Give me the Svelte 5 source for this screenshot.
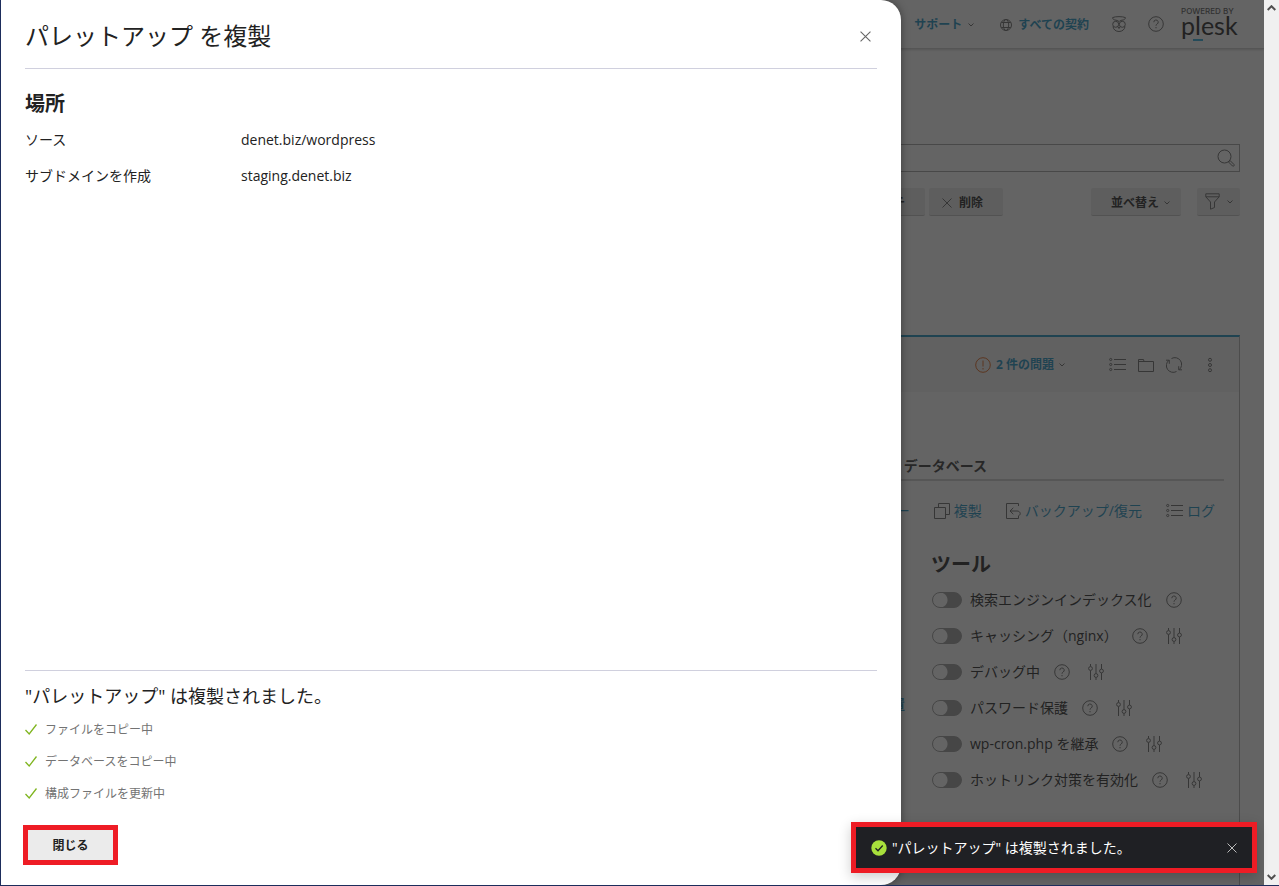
<script>
  const steps = ['ファイルをコピー中', 'データベースをコピー中', '構成ファイルを更新中'];
  const tools = [
    { label: '検索エンジンインデックス化', settings: false },
    { label: 'キャッシング（nginx）', settings: true },
    { label: 'デバッグ中', settings: true },
    { label: 'パスワード保護', settings: true },
    { label: 'wp-cron.php を継承', settings: true },
    { label: 'ホットリンク対策を有効化', settings: true },
  ];
</script>

{#snippet chevron()}
  <svg class="chevron" width="6" height="6" viewBox="0 0 6 6"><path d="M.5 1.5 3 4 5.500 1.500" /></svg>
{/snippet}

{#snippet help()}
  <svg width="16" height="16" viewBox="0 0 16 16"><circle cx="8" cy="8" r="7.300" /><path d="M5.800 6.200a2.200 2.200 0 1 1 3.300 1.900C8.300 8.600 8 8.900 8 9.700M8 11v1.300" /></svg>
{/snippet}

{#snippet list()}
  <svg width="17" height="16" viewBox="0 0 17 16"><path d="M5 2.500h12M5 7.500h12M5 12.500h12" /><circle cx="1.700" cy="2.500" r="1.100" /><circle cx="1.700" cy="7.500" r="1.100" /><circle cx="1.700" cy="12.500" r="1.100" /></svg>
{/snippet}

{#snippet cross(size)}
  <svg width={size} height={size} viewBox="0 0 10 10"><path d="m.5.5 9 9m0-9-9 9" /></svg>
{/snippet}

<div class="window">
  <div class="page">
    <header class="topbar">
      <a href="#support" class="menu">サポート{@render chevron()}</a>
      <a href="#subscriptions" class="scope">
        <svg width="12" height="12" viewBox="0 0 12 12"><circle cx="6" cy="6" r="5.500" /><ellipse cx="6" cy="6" rx="2.700" ry="5.500" /><path d="M1.300 3.500h9.400M1.300 8.500h9.400" /></svg>
        すべての契約
      </a>
      <button class="plain" aria-label="アシスタント">
        <svg width="14" height="16" viewBox="0 0 14 16"><path d="M.6 1.600C3 .3 11 .3 13.400 1.600c-.2 2-1.600 2.400-3.400 2.600C8.500 4.400 7.500 4.900 7 5.600 6.500 4.900 5.500 4.400 4 4.200 2.200 4 .8 3.600.6 1.600M1 10.500c.3 3 2.800 5 6 5s5.700-2 6-5M5.800 10.500 7 12.500l1.200-2" /><circle cx="3.700" cy="8.300" r="3" /><circle cx="10.300" cy="8.300" r="3" /></svg>
      </button>
      <button class="plain" aria-label="ヘルプ">{@render help()}</button>
      <div class="brand"><small>POWERED BY</small><span>plesk</span></div>
    </header>

    <main>
      <label class="search">
        <input type="search" aria-label="検索" />
        <svg width="18" height="18" viewBox="0 0 18 18"><circle cx="7.500" cy="7.500" r="6.500" /><path d="m11.500 13 1.500-1.500 4 4c.8 1-.7 2.300-1.500 1.500z" /></svg>
      </label>

      <div class="toolbar">
        <button class="btn cut">チ</button>
        <button class="btn remove">{@render cross(10)}削除</button>
        <button class="btn sort">並べ替え{@render chevron()}</button>
        <button class="btn filter" aria-label="フィルタ">
          <svg width="15" height="17" viewBox="0 0 15 17"><path d="M.8.8h13.400v3L9.500 9v5.500l-4 1.700V9L.8 3.800zM.8 3.800h13.400" /></svg>
          {@render chevron()}
        </button>
      </div>

      <section class="card">
        <header class="cardbar">
          <a href="#issues" class="issues">
            <svg class="warn" width="16" height="16" viewBox="0 0 16 16"><circle cx="8" cy="8" r="7.300" /><path d="M8 3.500v6M8 11v1.500" /></svg>
            2 件の問題{@render chevron()}
          </a>
          <div class="actions">
            <button class="plain" aria-label="ログ">{@render list()}</button>
            <button class="plain" aria-label="フォルダ"><svg width="16" height="16" viewBox="0 0 16 16"><path d="M.5 14.500v-12h5l.500 2h9.500v10zM.5 4.500H6" /></svg></button>
            <button class="plain" aria-label="更新"><svg width="16" height="16" viewBox="0 0 16 16"><path d="M5.500 1.500A6.800 6.800 0 0 1 13 12.800M10.500 14.500A6.800 6.800 0 0 1 3 3.200M0 3.200h3.300v3.600M16 12.800h-3.300V9.200" /></svg></button>
          </div>
          <button class="plain" aria-label="その他"><svg width="6" height="16" viewBox="0 0 6 16"><circle cx="3" cy="2.800" r="1.500" /><circle cx="3" cy="8" r="1.500" /><circle cx="3" cy="13.200" r="1.500" /></svg></button>
        </header>

        <div class="cardbody">
          <nav class="tabs"><a href="#database">データベース</a></nav>
          <nav class="links">
            <a href="#login">ー</a>
            <a href="#clone"><svg width="16" height="16" viewBox="0 0 16 16"><path d="M.5 4.500h11v11H.5zM4.500 4.500v-4h11v11h-4" /></svg>複製</a>
            <a href="#backup"><svg width="15" height="16" viewBox="0 0 15 16"><path d="M12.500 3V.5H.5v15h12V13M7.300 4.800 4 8l3.300 3.200M4 8h7c4 0 4 4.500 1.500 4.500" /></svg>バックアップ/復元</a>
            <a href="#log">{@render list()}ログ</a>
          </nav>

          <div class="columns">
            <a href="#install" class="edge">置</a>
            <div class="tools">
              <h2>ツール</h2>
              <ul>
                {#each tools as tool}
                  <li>
                    <label><input type="checkbox" role="switch" />{tool.label}</label>
                    <button class="plain" aria-label="ヘルプ">{@render help()}</button>
                    {#if tool.settings}
                      <button class="plain gear" aria-label="設定">
                        <svg width="16" height="16" viewBox="0 0 16 16"><path d="M2.500 0v2.500M2.500 6.500V16M8 0v9.500M8 13.500V16M13.500 0v5M13.500 9v7" /><circle cx="2.500" cy="4.500" r="1.900" /><circle cx="8" cy="11.500" r="1.900" /><circle cx="13.500" cy="7" r="1.900" /></svg>
                      </button>
                    {/if}
                  </li>
                {/each}
              </ul>
            </div>
          </div>
        </div>
      </section>
    </main>
  </div>

  <div class="scrim"></div>

  <div class="scroll">
    <svg width="9" height="6" viewBox="0 0 9 6"><path d="M.700 5 4.500 1.200 8.300 5" /></svg>
    <svg width="9" height="6" viewBox="0 0 9 6"><path d="M.700 1 4.500 4.800 8.300 1" /></svg>
  </div>

  <div class="drawer" role="dialog" aria-labelledby="drawer-title">
    <header>
      <h1 id="drawer-title">パレットアップ を複製</h1>
      <button class="plain" aria-label="閉じる">{@render cross(11)}</button>
    </header>
    <div class="content">
      <h2>場所</h2>
      <dl>
        <dt>ソース</dt><dd>denet.biz/wordpress</dd>
        <dt>サブドメインを作成</dt><dd>staging.denet.biz</dd>
      </dl>
    </div>
    <footer>
      <h3>"パレットアップ" は複製されました。</h3>
      <ul>
        {#each steps as step}
          <li><svg width="12" height="12" viewBox="0 0 12 12"><path d="m.5 6 3.700 4L11.500.5" /></svg>{step}</li>
        {/each}
      </ul>
      <button class="close">閉じる</button>
    </footer>
  </div>

  <div class="toast" role="status">
    <svg width="16" height="16" viewBox="0 0 16 16"><circle class="dot" cx="8" cy="8" r="7.700" /><path class="tick" d="m4.500 8.200 2.500 2.500 4.700-5.200" /></svg>
    <p>"パレットアップ" は複製されました。</p>
    <button class="plain" aria-label="通知を閉じる">{@render cross(10)}</button>
  </div>
</div>

<style>
  :global(body) { margin: 0; }
  * { box-sizing: border-box; }
  h1, h2, h3, p, ul, dl, dd { margin: 0; padding: 0; }
  ul { list-style: none; }
  a { color: #1a8fc0; text-decoration: none; }
  svg { flex: none; display: block; fill: none; stroke: #666; stroke-width: 1; }
  button, input { font: inherit; color: inherit; }
  .plain { padding: 0; border: 0; background: none; display: flex; }

  .window {
    position: relative;
    height: 100vh;
    overflow: hidden;
    display: grid;
    grid-template-columns: minmax(0, 1fr) 15px;
    border: solid #1d2d5c;
    border-width: 0 0 1px 1px;
    background: #fff;
    color: #222;
    font: 14px/20px "Open Sans", "Noto Sans CJK JP", sans-serif;
  }
  .page { overflow: hidden; display: flex; flex-direction: column; }

  .topbar {
    flex: none;
    height: 49px;
    padding-right: 24px;
    display: flex;
    justify-content: flex-end;
    align-items: center;
    gap: 22px;
    border-bottom: 1px solid #ccc;
    box-shadow: 0 1px 2px rgba(0, 0, 0, .2);
    font-size: 12px;
    font-weight: 700;
  }
  .topbar a { display: flex; align-items: center; gap: 6px; padding-top: 1px; }
  .menu { margin-right: 4px; }
  .scope { margin-right: 1px; }
  .brand { position: relative; width: 59px; margin-left: -5px; padding-bottom: 6px; font-family: Lato, sans-serif; font-weight: 400; }
  .brand small { display: block; font: 500 8px/8px Inter, sans-serif; white-space: nowrap; color: #555; }
  .brand span { display: block; font-size: 25px; line-height: 20px; }
  .brand::after { content: ""; position: absolute; left: 12px; bottom: 0; width: 10px; height: 2px; background: #28aade; }

  main { flex: 1; padding: 95px 24px 0; display: flex; flex-direction: column; min-height: 0; }
  .search {
    flex: none;
    height: 28px;
    padding-right: 4px;
    display: flex;
    align-items: center;
    border: 1px solid #a0a0a0;
  }
  .search input { flex: 1; height: 24px; border: 0; outline: 0; background: none; appearance: none; }
  .toolbar { display: flex; justify-content: flex-end; margin-top: 16px; }
  .btn {
    height: 28px;
    padding: 2px 13px 0;
    display: flex;
    align-items: center;
    gap: 7px;
    border: 0;
    border-bottom: 1px solid #c4c4c4;
    border-radius: 2px;
    background: #ebebeb;
    font-size: 12px;
    font-weight: 700;
    white-space: nowrap;
  }
  .cut { padding: 2px 20px 0; margin-right: 4px; }
  .remove { width: 74px; margin-right: 88px; }
  .sort { width: 90px; padding: 2px 0 0 20px; margin-right: 16px; gap: 5px; }
  .filter { width: 43px; padding: 0 8px; }

  .card {
    flex: 1;
    margin-top: 119px;
    border-top: 2px solid #1a8fc0;
    border-right: 1px solid #b0b0b0;
  }
  .cardbar {
    height: 55px;
    padding-right: 26px;
    display: flex;
    align-items: center;
    justify-content: flex-end;
    background: #f5f5f5;
  }
  .issues { display: flex; align-items: center; gap: 5px; font-size: 12px; font-weight: 700; }
  .warn { stroke: #e0641c; }
  .actions { display: flex; gap: 12px; margin: 0 25px 0 44px; }
  .cardbody { padding: 61px 15px 0 0; }
  .tabs { display: flex; justify-content: flex-end; padding: 3px 237px 3px 0; border-bottom: 2px solid #d0d0d0; }
  .tabs a { color: #333; font-weight: 600; }
  .links { display: flex; justify-content: flex-end; gap: 24px; padding: 20px 9px 0 0; }
  .links a { display: flex; align-items: center; gap: 4px; }
  .columns { display: grid; grid-template-columns: minmax(0, 1fr) 293px; }
  .edge { justify-self: end; align-self: center; padding: 88px 26px 0 0; font-weight: 600; }
  .tools h2 { margin-top: 30px; font-size: 20px; line-height: 28px; }
  .tools ul { margin-top: 3px; }
  .tools li { height: 36px; display: flex; align-items: center; gap: 14px; }
  .gear { margin-left: 4px; }
  .tools label { display: flex; align-items: center; gap: 8px; }
  .tools input {
    appearance: none;
    width: 30px;
    height: 16px;
    margin: 0 0 0 1px;
    border: 1px solid #999;
    border-radius: 8px;
    background: radial-gradient(circle at 7px 7px, #fff 7px, #999 8px);
  }

  .scrim { position: absolute; inset: 0 15px 0 0; background: rgba(34, 34, 34, .7); }

  .scroll { display: flex; flex-direction: column; justify-content: space-between; align-items: center; padding: 5px 0; background: #f0f0f0; }
  .scroll svg { stroke: #505050; stroke-width: 2; }

  .drawer {
    position: absolute;
    inset: 0 auto 0 0;
    width: min(900px, 100%);
    padding: 0 24px;
    display: flex;
    flex-direction: column;
    border-radius: 0 20px 20px 0;
    background: #fff;
    box-shadow: 0 0 8px rgba(0, 0, 0, .4);
  }
  .drawer header {
    height: 69px;
    padding: 4px 6px 0 0;
    display: flex;
    align-items: center;
    justify-content: space-between;
    border-bottom: 1px solid #d0d0de;
  }
  h1 { font-size: 24px; line-height: 32px; font-weight: 400; }
  .content { flex: 1; padding-top: 21px; }
  .content h2 { font-size: 20px; line-height: 28px; }
  dl { display: grid; grid-template-columns: 216px 1fr; margin-top: 4px; line-height: 36px; }
  .drawer footer { padding: 11px 0 22px; border-top: 1px solid #d0d0de; }
  h3 { font-size: 18px; line-height: 28px; font-weight: 400; }
  footer ul { margin: 4px 0 17px; font-size: 12px; color: #737373; }
  footer li { height: 32px; display: flex; align-items: center; gap: 8px; }
  footer li svg { stroke: #7fb51f; stroke-width: 1.300; }
  .close {
    width: 91px;
    height: 36px;
    padding: 2px 0 0;
    border: 0;
    outline: 5px solid #ee1c25;
    outline-offset: -3px;
    background: #ebebeb;
    font-size: 12px;
    font-weight: 700;
  }

  .toast {
    position: absolute;
    right: 22px;
    bottom: 12px;
    width: 406px;
    height: 51px;
    padding: 0 15px;
    display: flex;
    align-items: center;
    gap: 5px;
    border: 5px solid #ee1c25;
    background: #1f2024;
    color: #fff;
    box-shadow: 0 4px 12px rgba(0, 0, 0, .2);
  }
  .toast p { flex: 1; }
  .toast .dot { fill: #a8e03c; stroke: none; }
  .toast .tick { stroke: #1f2024; stroke-width: 1.300; }
  .toast button svg { stroke: #bbb; }
</style>
